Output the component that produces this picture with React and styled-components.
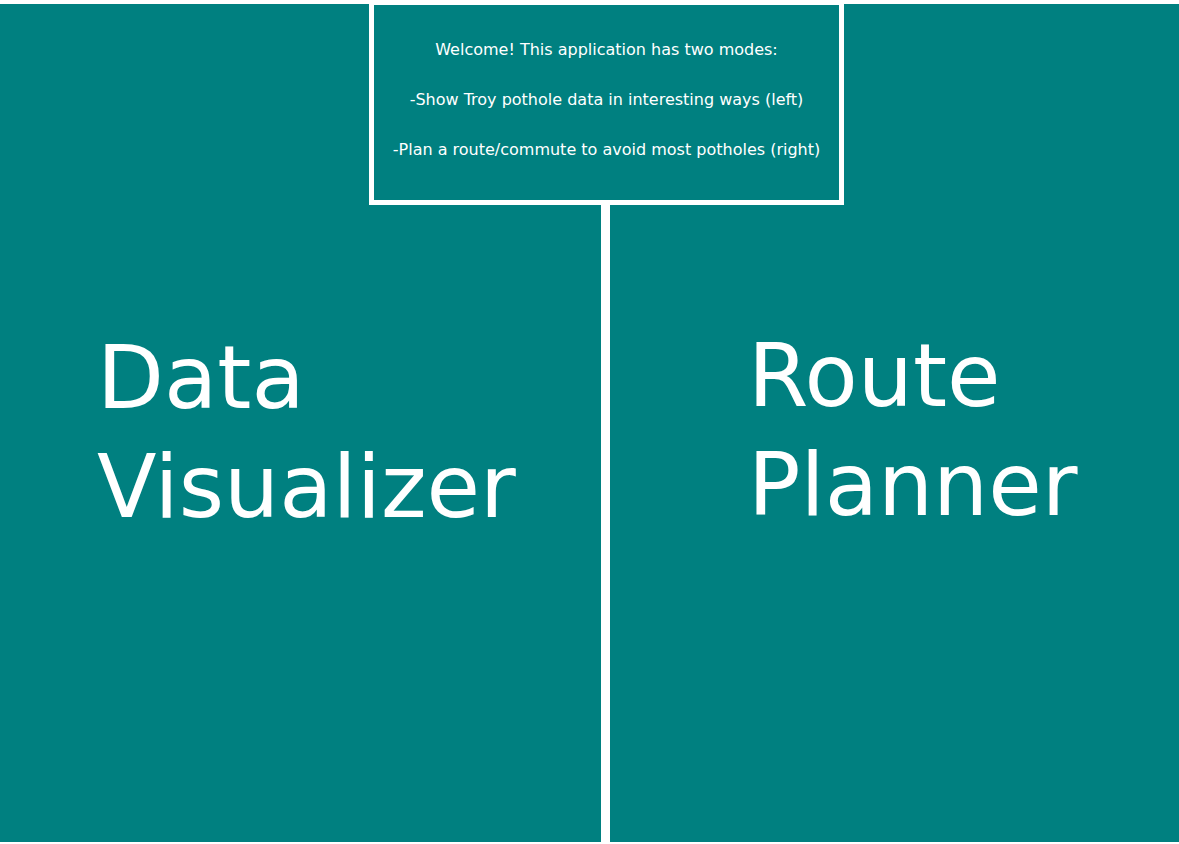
import React from "react";
import styled, { createGlobalStyle } from "styled-components";

const GlobalStyle = createGlobalStyle`
  * { box-sizing: border-box; }
  body { margin: 0; background: #fff; font-family: "DejaVu Sans", Verdana, sans-serif; }
`;

const Page = styled.main`
  position: relative;
  display: grid;
  grid-template-columns: 601fr 569fr;
  column-gap: 9px;
  min-height: 100vh;
  padding: 4px 0 2px;
`;

const Mode = styled.a`
  display: flex;
  align-items: center;
  padding-top: ${(p) => p.$drop}px;
  padding-left: ${(p) => p.$inset}px;
  background: #008080;
  color: #fff;
  font-size: 87px;
  line-height: 109px;
  text-decoration: none;
`;

const Label = styled.span`
  width: min-content;
`;

const Welcome = styled.section`
  position: absolute;
  top: 0;
  left: 51.4%;
  width: 475px;
  margin-left: -237px;
  padding: 20px 0 25px;
  border: 5px solid #fff;
  background: #008080;
  color: #fff;
  text-align: center;
  font-size: 16px;
  line-height: 50px;
`;

const Line = styled.p`
  margin: 0;
`;

export default function App() {
  return (
    <>
      <GlobalStyle />
      <Page>
        <Mode href="#visualizer" $inset={97} $drop={20}>
          <Label>Data Visualizer</Label>
        </Mode>
        <Mode href="#planner" $inset={138} $drop={16}>
          <Label>Route Planner</Label>
        </Mode>
        <Welcome>
          <Line>Welcome! This application has two modes:</Line>
          <Line>-Show Troy pothole data in interesting ways (left)</Line>
          <Line>-Plan a route/commute to avoid most potholes (right)</Line>
        </Welcome>
      </Page>
    </>
  );
}
